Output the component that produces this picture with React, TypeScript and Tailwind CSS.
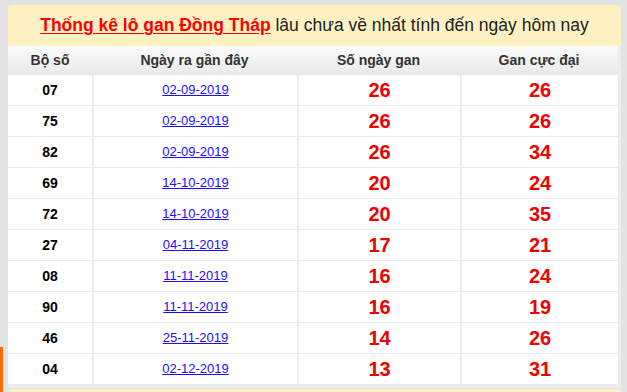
const rows = [
  { bo: "07", date: "02-09-2019", gan: 26, max: 26 },
  { bo: "75", date: "02-09-2019", gan: 26, max: 26 },
  { bo: "82", date: "02-09-2019", gan: 26, max: 34 },
  { bo: "69", date: "14-10-2019", gan: 20, max: 24 },
  { bo: "72", date: "14-10-2019", gan: 20, max: 35 },
  { bo: "27", date: "04-11-2019", gan: 17, max: 21 },
  { bo: "08", date: "11-11-2019", gan: 16, max: 24 },
  { bo: "90", date: "11-11-2019", gan: 16, max: 19 },
  { bo: "46", date: "25-11-2019", gan: 14, max: 26 },
  { bo: "04", date: "02-12-2019", gan: 13, max: 31 },
];

const App = () => {
  return (
    <div className="relative h-[392px] w-[627px] overflow-hidden bg-[#e3e3e3] pl-[8px] pr-[6px] pt-[5px] font-['Liberation_Sans',Arial,sans-serif]">
      {/* floating tab on the left edge */}
      <div className="absolute left-0 top-[347px] h-[60px] w-[3px] bg-[#ff6a00]" />

      <div className="rounded-t-[4px] bg-[#ececec] pb-[4px]">
        <div className="flex h-[41px] items-center justify-center rounded-t-[4px] bg-[#fdf1c3] text-[17.5px] text-[#222]">
          <a href="#" className="font-bold text-[#ff0000] underline underline-offset-2">
            Thống kê lô gan Đồng Tháp
          </a>
          <span className="whitespace-pre"> lâu chưa về nhất tính đến ngày hôm nay</span>
        </div>

        <div className="mr-[3px] bg-white">
          <div className="grid h-[29px] grid-cols-[84px_205px_163px_1fr] items-center bg-gradient-to-b from-[#fbfbfb] to-[#e9e9e9] text-center text-[14px] font-bold text-[#333]">
            <div>Bộ số</div>
            <div>Ngày ra gần đây</div>
            <div>Số ngày gan</div>
            <div>Gan cực đại</div>
          </div>
          {rows.map((r, i) => (
            <div
              key={i}
              className={
                "grid grid-cols-[84px_205px_163px_1fr] text-center " +
                (i > 0 ? "h-[31px] border-t border-[#ebebeb]" : "h-[30px]")
              }
            >
              <div className="flex items-center justify-center text-[14px] font-bold text-black">{r.bo}</div>
              <div className="flex items-center justify-center border-l-2 border-[#ececec] text-[13px]">
                <a href="#" className="text-[#1a0dff] underline">{r.date}</a>
              </div>
              <div className="flex items-center justify-center border-l-2 border-[#ececec] text-[20px] font-bold text-[#ee0000]">
                {r.gan}
              </div>
              <div className="flex items-center justify-center border-l-2 border-[#ececec] text-[20px] font-bold text-[#ee0000]">
                {r.max}
              </div>
            </div>
          ))}
        </div>
      </div>

      <div className="mt-[1px] h-[20px] rounded-t-[4px] bg-[#fdf1c3]" />
    </div>
  );
};

export default App;
